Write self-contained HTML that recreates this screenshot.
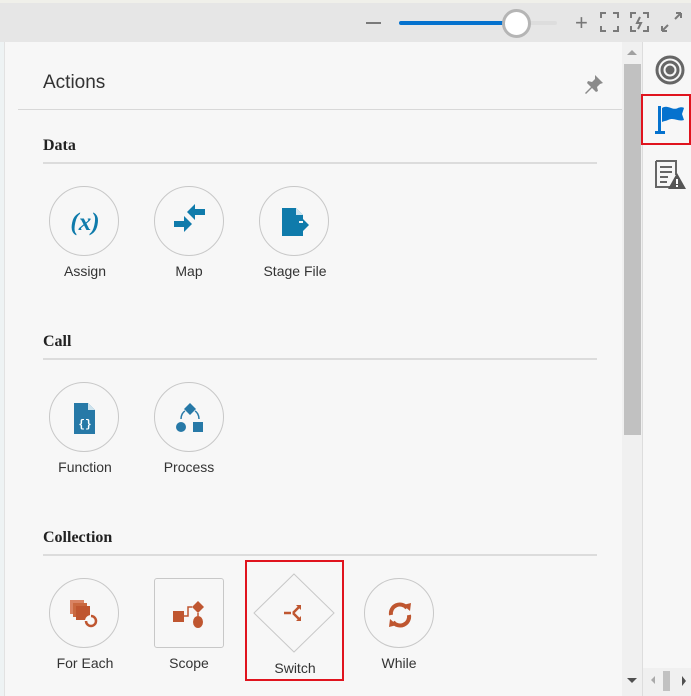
<!DOCTYPE html>
<html><head><style>
*{margin:0;padding:0;box-sizing:border-box}
body{width:691px;height:696px;overflow:hidden;background:#f7f7f7;font-family:"Liberation Sans",sans-serif;position:relative}
.a{position:absolute}
.top{left:0;top:0;width:691px;height:42px;background:#e6e6e6;border-top:3px solid #f0f0ea}
.lab{position:absolute;font-size:14px;color:#333;text-align:center;width:110px}
.h{position:absolute;font-family:"Liberation Serif",serif;font-weight:bold;font-size:16px;color:#222;left:43px}
.ln{position:absolute;left:43px;width:554px;height:2px;background:#dcdcdc}
.c{position:absolute;width:70px;height:70px;border:1px solid #c8c8c8;border-radius:50%;background:#f7f7f7}
.c svg,.sq svg{position:absolute;left:0;top:0}
</style></head><body>
<div class="a top"></div>
<div class="a" style="left:0;top:42px;width:4px;height:654px;background:#eef3f4"></div>
<div class="a" style="left:4px;top:42px;width:1px;height:654px;background:#e2e2e2"></div>
<!-- toolbar -->
<div class="a" style="left:366px;top:22px;width:15px;height:2px;background:#7a7a7a"></div>
<div class="a" style="left:399px;top:21px;width:105px;height:4px;background:#0572ce;border-radius:2px"></div>
<div class="a" style="left:504px;top:21px;width:53px;height:4px;background:#ddd;border-radius:2px"></div>
<div class="a" style="left:502px;top:9px;width:29px;height:29px;border-radius:50%;background:#fff;border:3px solid #b5b5b5"></div>
<div class="a" style="left:575px;top:15px;font-size:22px;color:#777;line-height:16px">+</div>
<svg class="a" style="left:600px;top:12px" width="90" height="24" viewBox="0 0 90 24" fill="none" stroke="#7a7a7a" stroke-width="2">
<path d="M1 6V1h5M13 1h5v5M18 14v5h-5M6 19H1v-5"/>
<path d="M31 6V1h5M43 1h5v5M48 14v5h-5M36 19h-5v-5M40 5l-3 6h4l-3 6"/>
<path d="M62 19l6-6M62 19v-5M62 19h5M81 1l-6 6M81 1v5M81 1h-5"/>
</svg>
<!-- panel -->
<div class="a" style="left:43px;top:72px;font-size:19px;color:#333">Actions</div>
<svg class="a" style="left:583px;top:73px" width="22" height="22" viewBox="0 0 22 22"><path d="M12 2l8 8-3 1-3 3 1 4-2 1-4-4-6 6-1-1 6-6-4-4 1-2 4 1 3-3z" fill="#8a8a8a"/></svg>
<div class="a" style="left:18px;top:109px;width:604px;height:1px;background:#d8d8d8"></div>
<!-- scrollbar -->
<div class="a" style="left:622px;top:42px;width:21px;height:654px;background:#f0f0f0;border-right:1px solid #ddd"></div>
<div class="a" style="left:624px;top:64px;width:17px;height:371px;background:#c1c1c1"></div>
<div class="a" style="left:627px;top:50px;width:0;height:0;border:5px solid transparent;border-bottom:5px solid #a0a0a0;border-top:0"></div>
<div class="a" style="left:627px;top:678px;width:0;height:0;border:5px solid transparent;border-top:5px solid #505050;border-bottom:0"></div>
<!-- right sidebar -->
<div class="a" style="left:643px;top:668px;width:48px;height:28px;background:#f0f0f0"></div>
<div class="a" style="left:651px;top:676px;border:4px solid transparent;border-right:4px solid #aaa;border-left:0"></div>
<div class="a" style="left:663px;top:671px;width:7px;height:20px;background:#c1c1c1"></div>
<div class="a" style="left:682px;top:676px;border:5px solid transparent;border-left:4px solid #505050;border-right:0"></div>
<svg class="a" style="left:654px;top:54px" width="32" height="32" viewBox="0 0 32 32"><circle cx="16" cy="16" r="13" fill="none" stroke="#666" stroke-width="3"/><circle cx="16" cy="16" r="8" fill="none" stroke="#666" stroke-width="3"/><circle cx="16" cy="16" r="4.5" fill="#666"/></svg>
<div class="a" style="left:641px;top:94px;width:50px;height:51px;border:2px solid #e0141e"></div>
<svg class="a" style="left:655px;top:103px" width="32" height="34" viewBox="0 0 32 34"><rect x="3" y="3" width="3" height="26" fill="#0572ce"/><rect x="0" y="28" width="10" height="3" fill="#0572ce"/><path d="M7 5c6-4 10 3 16 0 2-1 5-1 6 0l-2 6 2 6c-6 2-10-3-16 0-2 1-4 1-6 2z" fill="#0572ce"/></svg>
<svg class="a" style="left:654px;top:159px" width="34" height="34" viewBox="0 0 34 34"><path d="M2 2h20v14M2 2v26h14" fill="none" stroke="#666" stroke-width="2"/><path d="M6 8h12M6 13h12M6 18h8M6 23h7" stroke="#666" stroke-width="2"/><path d="M23 14l9 16H14z" fill="#555"/><rect x="22" y="20" width="2" height="5" fill="#fff"/><rect x="22" y="26" width="2" height="2" fill="#fff"/></svg>
<!-- Data -->
<div class="h" style="top:137px">Data</div>
<div class="ln" style="top:162px"></div>
<div class="c" style="left:49px;top:186px"><svg width="70" height="70"><text x="35" y="43" text-anchor="middle" font-family="Liberation Serif,serif" font-style="italic" font-size="25" font-weight="bold" fill="#0f7bab">(x)</text></svg></div>
<div class="c" style="left:154px;top:186px"><svg width="70" height="70" viewBox="0 0 70 70"><path d="M19 38h10v-5l8 8-8 8v-5H19z" fill="#0f7bab" transform="translate(0,-4)"/><path d="M50 32H40v5l-8-8 8-8v5h10z" fill="#0f7bab" transform="translate(0,-4)"/></svg></div>
<div class="c" style="left:259px;top:186px"><svg width="70" height="70" viewBox="0 0 70 70"><path d="M22 21h14l7 7v6h-4v6h4v9H22z" fill="#0f7bab"/><path d="M36 21v7h7z" fill="#cfe6f0"/><path d="M39 36h4v-4l6 6-6 6v-4h-4z" fill="#0f7bab"/></svg></div>
<div class="lab" style="left:30px;top:263px">Assign</div>
<div class="lab" style="left:134px;top:263px">Map</div>
<div class="lab" style="left:240px;top:263px">Stage File</div>
<!-- Call -->
<div class="h" style="top:333px">Call</div>
<div class="ln" style="top:358px"></div>
<div class="c" style="left:49px;top:382px"><svg width="70" height="70" viewBox="0 0 70 70"><path d="M24 20h14l7 7v24H24z" fill="#2779a7"/><path d="M38 20v7h7z" fill="#cde3ee"/><text x="35" y="44" text-anchor="middle" font-family="Liberation Mono,monospace" font-weight="bold" font-size="11" fill="#fff">{}</text></svg></div>
<div class="c" style="left:154px;top:382px"><svg width="70" height="70" viewBox="0 0 70 70"><path d="M35 20l6 6-6 6-6-6z" fill="#2779a7"/><circle cx="26" cy="44" r="5" fill="#2779a7"/><rect x="38" y="39" width="10" height="10" fill="#2779a7"/><path d="M26 36c0-4 2-7 4-8M44 36c0-4-2-7-4-8" fill="none" stroke="#2779a7" stroke-width="1.5"/></svg></div>
<div class="lab" style="left:30px;top:459px">Function</div>
<div class="lab" style="left:134px;top:459px">Process</div>
<!-- Collection -->
<div class="h" style="top:529px">Collection</div>
<div class="ln" style="top:554px"></div>
<div class="c" style="left:49px;top:578px"><svg width="70" height="70" viewBox="0 0 70 70"><rect x="20" y="21" width="14" height="14" fill="#d98363"/><rect x="23" y="24" width="14" height="14" fill="#c9683f"/><rect x="26" y="27" width="14" height="14" fill="#bf5630"/><circle cx="41" cy="42" r="6" fill="#f7f7f7"/><path d="M36 42a5 5 0 1 0 5-5" fill="none" stroke="#bf5630" stroke-width="2.5"/></svg></div>
<div class="a" style="left:154px;top:578px;width:70px;height:70px;border:1px solid #c8c8c8;border-radius:3px"><svg width="70" height="70" viewBox="0 0 70 70"><rect x="18" y="32" width="11" height="11" fill="#bf5630"/><path d="M43 22l6 6-6 6-6-6z" fill="#bf5630"/><ellipse cx="43" cy="43" rx="5" ry="6" fill="#bf5630"/><path d="M29 37h4v-9h4M43 34v3" fill="none" stroke="#bf5630" stroke-width="1.5"/></svg></div>
<div class="a" style="left:245px;top:560px;width:99px;height:121px;border:2px solid #e0141e"></div>
<svg class="a" style="left:253px;top:572px" width="84" height="84" viewBox="0 0 84 84"><path d="M41 2L81 41 41 80 1 41z" fill="#f7f7f7" stroke="#c8c8c8"/><path d="M31 41h7M40 41l6-6M40 41l6 6" stroke="#bf5630" stroke-width="2.5" fill="none"/><path d="M43 33h5v5zM43 49h5v-5z" fill="#bf5630"/></svg>
<div class="c" style="left:364px;top:578px"><svg width="70" height="70" viewBox="0 0 70 70"><path d="M26 36a9 9 0 0 1 16-7" fill="none" stroke="#bf5630" stroke-width="4"/><path d="M44 36a9 9 0 0 1-16 7" fill="none" stroke="#bf5630" stroke-width="4"/><path d="M38 26l8-2-1 8z M32 46l-8 2 1-8z" fill="#bf5630"/></svg></div>
<div class="lab" style="left:30px;top:655px">For Each</div>
<div class="lab" style="left:134px;top:655px">Scope</div>
<div class="lab" style="left:240px;top:660px">Switch</div>
<div class="lab" style="left:344px;top:655px">While</div>
</body></html>
